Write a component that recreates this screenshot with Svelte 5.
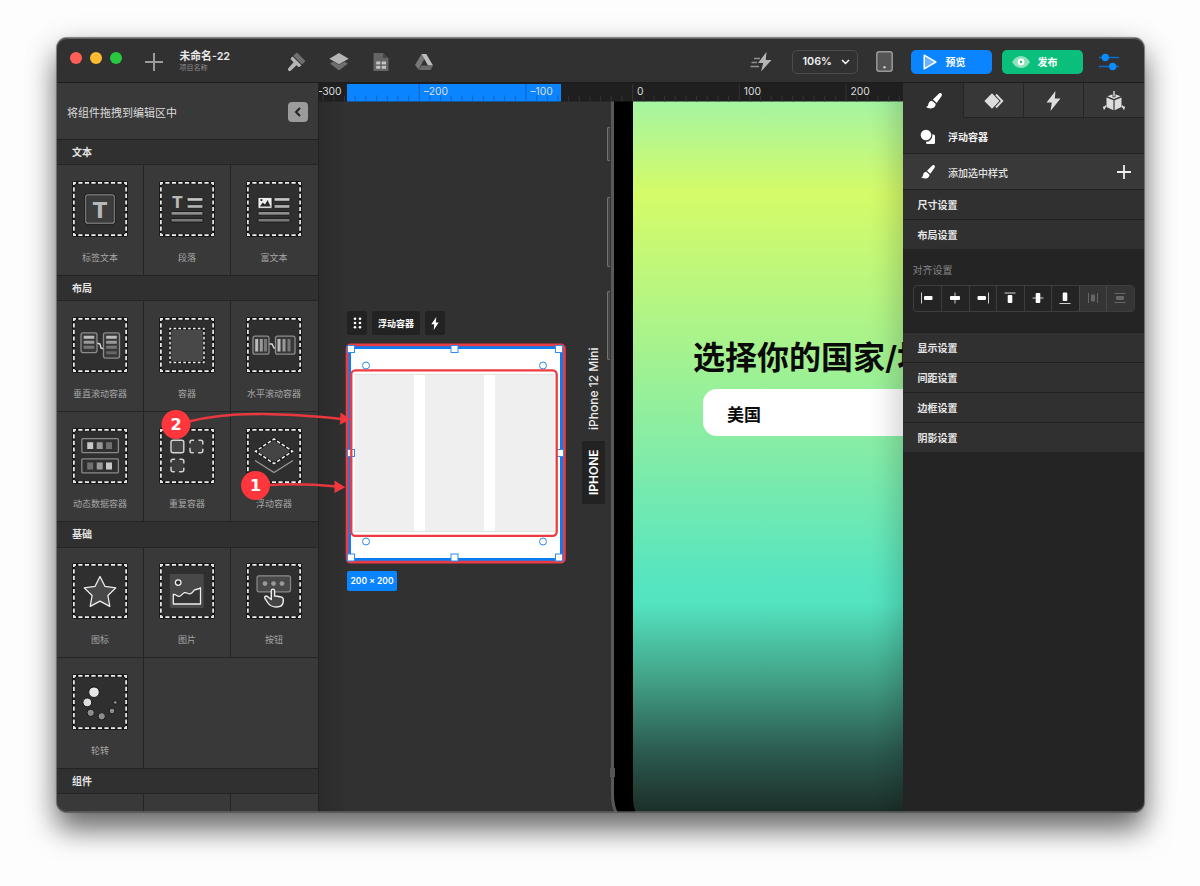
<script lang="ts">
  type Item = { icon: string; label: string };

  const groups: { title: string; items: Item[]; blank?: boolean }[] = [
    {
      title: '文本',
      items: [
        { icon: 'label', label: '标签文本' },
        { icon: 'paragraph', label: '段落' },
        { icon: 'rich', label: '富文本' }
      ]
    },
    {
      title: '布局',
      items: [
        { icon: 'vscroll', label: '垂直滚动容器' },
        { icon: 'container', label: '容器' },
        { icon: 'hscroll', label: '水平滚动容器' },
        { icon: 'dynamic', label: '动态数据容器' },
        { icon: 'repeat', label: '重复容器' },
        { icon: 'float', label: '浮动容器' }
      ]
    },
    {
      title: '基础',
      items: [
        { icon: 'star', label: '图标' },
        { icon: 'image', label: '图片' },
        { icon: 'button', label: '按钮' },
        { icon: 'spinner', label: '轮转' }
      ]
    },
    { title: '组件', items: [], blank: true }
  ];

  const aligns = ['left', 'center', 'right', 'top', 'middle', 'bottom', 'spread-x', 'spread-y'];
  const closedSections = ['显示设置', '间距设置', '边框设置', '阴影设置'];

  // ruler: 100 units are 106.7px wide, zero sits at 314px from the pane's left edge
  const unit = 10.67;
  const ticks = Array.from({ length: 56 }, (_, i) => i - 30).map((n) => ({
    n,
    x: 313.6 + n * unit
  }));

  const handles = [
    [32, 266], [135.5, 266], [240, 266],
    [32, 370], [241, 370],
    [32, 474.5], [135.5, 474.5], [240, 474.5]
  ];
  const knobs = [[47, 282.5], [224, 282.5], [47, 458.5], [224, 458.5]];
</script>

{#snippet glyph(name: string)}
  <svg class="glyph" viewBox="0 0 56 56">
    <rect x="0.8" y="0.8" width="54.4" height="54.4" rx="1" fill="#2f2f2f" stroke="#161616" />
    <rect x="1.9" y="1.9" width="52.2" height="52.2" fill="none" stroke="#161616" stroke-width="2.6" />
    <rect
      x="1.9" y="1.9" width="52.2" height="52.2" fill="none" stroke="#eee" stroke-width="1.7"
      stroke-dasharray="4.2 2.325" stroke-dashoffset="2.1"
    />
    {#if name === 'label'}
      <rect x="13.8" y="13.8" width="28.4" height="28.4" rx="2" fill="#3c3c3c" stroke="#161616" stroke-width="2.6" />
      <rect x="13.8" y="13.8" width="28.4" height="28.4" rx="2" fill="none" stroke="#8f8f8f" stroke-width="1.2" />
      <text x="28" y="36.6" font-size="21" text-anchor="middle" class="tee">T</text>
    {:else if name === 'paragraph' || name === 'rich'}
      {#if name === 'paragraph'}
        <text x="18.4" y="27.3" font-size="15" text-anchor="middle" class="tee">T</text>
      {:else}
        <rect x="12" y="16.4" width="14" height="11" rx="1" fill="#eee" stroke="#161616" stroke-width=".8" />
        <path d="M13.8 25.6l3-4.2 2.2 2 2.6-4.4 3 6.6z" fill="#2a2a2a" />
        <circle cx="15.4" cy="19.1" r="1.1" fill="#2a2a2a" />
      {/if}
      <g stroke="#161616" stroke-width=".9">
        <rect x="28" y="16.6" width="16" height="3.7" rx="1" fill="#c4c4c4" />
        <rect x="28" y="23.6" width="16" height="3.7" rx="1" fill="#b0b0b0" />
        <rect x="12" y="30.5" width="32" height="3.7" rx="1" fill="#8e8e8e" />
        <rect x="12" y="37.4" width="32" height="3.7" rx="1" fill="#777" />
      </g>
    {:else if name === 'vscroll'}
      <path d="M25 26l3 1 1 4 3 1" fill="none" stroke="#ddd" stroke-width="1.4" />
      <g fill="#383838" stroke="#8c8c8c" stroke-width="1.3">
        <rect x="9" y="15.8" width="16" height="19.8" rx="2" />
        <rect x="31.5" y="15.8" width="16" height="25.3" rx="2" />
      </g>
      <path d="M11.7 20.3h10.6M34.2 20.3h10.6" stroke="#bbb" stroke-width="3" />
      <path d="M11.7 25.3h10.6M34.2 25.3h10.6" stroke="#999" stroke-width="3" />
      <path d="M11.7 30.3h10.6M34.2 30.3h10.6" stroke="#777" stroke-width="3" />
      <path d="M34.2 35.8h10.6" stroke="#666" stroke-width="3" />
    {:else if name === 'container'}
      <rect x="11" y="11.5" width="34" height="34" fill="#484848" stroke="#161616" stroke-width="2.4" />
      <rect
        x="11" y="11.5" width="34" height="34" fill="none" stroke="#eee" stroke-width="1.5"
        stroke-dasharray="2.7 2.157" stroke-dashoffset="1.35"
      />
    {:else if name === 'hscroll'}
      <path d="M23 27l3 0 2 4 3 1" fill="none" stroke="#ddd" stroke-width="1.4" />
      <g fill="#383838" stroke="#8c8c8c" stroke-width="1.3">
        <rect x="7" y="19.2" width="16" height="18" rx="2" />
        <rect x="29.5" y="19.2" width="19.5" height="18" rx="2" />
      </g>
      <path d="M10.7 22v12.5M33 22v12.5" stroke="#bbb" stroke-width="3" />
      <path d="M15.3 22v12.5M38 22v12.5" stroke="#999" stroke-width="3" />
      <path d="M19.5 22v12.5M43 22v12.5" stroke="#777" stroke-width="3" />
    {:else if name === 'dynamic'}
      <g fill="#303030" stroke="#8a8a8a" stroke-width="1.3">
        <rect x="9.8" y="10.6" width="36.6" height="14" rx="1" />
        <rect x="9.8" y="30.9" width="36.6" height="14" rx="1" />
      </g>
      <path d="M15.2 14.3h6v6.8h-6zM34 34.6h6v6.8h-6z" fill="#c8c8c8" />
      <path d="M24.7 14.3h6v6.8h-6zM24.7 34.6h6v6.8h-6z" fill="#999" />
      <path d="M34 14.3h6v6.8h-6zM15.2 34.6h6v6.8h-6z" fill="#707070" />
    {:else if name === 'repeat'}
      <rect x="12" y="12.3" width="12.8" height="12.4" rx="2" fill="#444" stroke="#d5d5d5" stroke-width="1.4" />
      <g fill="#3c3c3c" stroke="#d0d0d0" stroke-width="1.5" stroke-dasharray="7.4 4.34" stroke-dashoffset="5.3">
        <rect x="31" y="12.3" width="12.8" height="12.4" rx="2" />
        <rect x="12" y="31.3" width="12.8" height="12.4" rx="2" />
      </g>
    {:else if name === 'float'}
      <path d="M9 32.4L28 44.5 47 32.4" fill="none" stroke="#9a9a9a" stroke-width="1.2" />
      <path d="M28 11L46.5 23.3 28 35.6 9.5 23.3z" fill="#444" stroke="#161616" stroke-width="2.6" />
      <path
        d="M28 11L46.5 23.3 28 35.6 9.5 23.3z" fill="none" stroke="#eee" stroke-width="1.5"
        stroke-dasharray="3.6 1.95" stroke-dashoffset="1.8"
      />
    {:else if name === 'star'}
      <path
        d="M28 13.5l4.9 9.8 10.9 1.6-7.9 7.6 1.9 10.8-9.8-5.1-9.8 5.1 1.9-10.8-7.9-7.6 10.9-1.6z"
        fill="#484848" stroke="#eee" stroke-width="1.3" stroke-linejoin="round"
      />
    {:else if name === 'image'}
      <rect x="10.8" y="11" width="34" height="34" rx="1" fill="#484848" />
      <circle cx="19.2" cy="19.6" r="2.8" fill="#2c2c2c" stroke="#eee" stroke-width="1.3" />
      <path
        d="M14.3 31.5c3-.6 3.5 2.2 6 1.8 2.5-.3 3-3 5.2-3.6 2.5-.6 3.7 1.8 6 1 2.5-.7 2.5-3.2 4.8-4 2-.7 3.500-.3 5.200-2V41H14.300z"
        fill="#333" stroke="#eee" stroke-width="1.3" stroke-linejoin="round"
      />
    {:else if name === 'button'}
      <rect x="11" y="12.8" width="33.5" height="16" rx="2" fill="#484848" stroke="#8a8a8a" stroke-width="1.2" />
      <g fill="#999">
        <circle cx="19" cy="20.6" r="2.4" /><circle cx="27.5" cy="20.6" r="2.4" /><circle cx="36" cy="20.6" r="2.4" />
      </g>
      <path
        d="M25.3 36.5v-8.7q0-1.7 1.6-1.7t1.7 1.7v5.2q6.5.5 8 1.7c1 .8.9 2.5.5 5-.5 3-3 4.3-6.6 4.3-4.5 0-7-1.5-8.9-4.5l-2.8-4.3c-.8-1.7 1-2.7 2.5-1.8l2 1.6z"
        fill="#444" stroke="#eee" stroke-width="1.4" stroke-linejoin="round"
      />
    {:else if name === 'spinner'}
      <g stroke="#161616">
        <circle cx="22" cy="18.2" r="5.3" fill="#e6e6e6" />
        <circle cx="15.3" cy="28.4" r="4.4" fill="#ddd" />
        <circle cx="18.7" cy="38.8" r="3.7" fill="#8c8c8c" />
        <circle cx="29.7" cy="42.3" r="3.7" fill="#8c8c8c" />
        <circle cx="40" cy="37" r="2.9" fill="#8c8c8c" />
        <circle cx="43.3" cy="28.4" r="1.9" fill="#8c8c8c" />
      </g>
    {/if}
  </svg>
{/snippet}

{#snippet brush(size: number)}
  <svg width={size} height={size} viewBox="0 0 18 18" fill="#fff">
    <path d="M17.3.7c1 1 .6 2.2-.1 3.200L12 11.200 7.700 7.400 14.100 1c1-.9 2.200-1.300 3.200-.3z" />
    <path d="M6.600 8.600l4.200 3.600c.3 3.200-2.400 5.200-5.400 5.200-2.500 0-4.500-.8-5.300-1.900 1.900-.3 2.200-1.300 2.600-3.100.4-2 2-3.800 3.900-3.800z" />
  </svg>
{/snippet}

<div class="window">
  <header class="toolbar">
    <div class="lights"><i class="red"></i><i class="amber"></i><i class="green"></i></div>
    <svg class="add" width="18" height="18" viewBox="0 0 18 18"><path d="M9 0v18M0 9h18" stroke="#9b9b9b" stroke-width="2" /></svg>
    <div class="project">
      <strong>未命名-22</strong>
      <small>项目名称</small>
    </div>
    <nav class="tools">
      <svg width="20" height="20" viewBox="0 0 20 20">
        <path d="M7.200 3.800L10.200.9q.6-.5 1.200 0L19 8.400q.6.600 0 1.200l-3 3z" fill="#707070" />
        <path d="M6.600 4.400l8.800 8.800-1.700 1.600q-.8.600-1.500 0l-1.700-1.600-5.800 5.500q-1.200.9-2.300-.1-1-1.200-.1-2.400l5.300-6-2.700-2.600q-.6-.8 0-1.500z" fill="#b5b5b5" />
      </svg>
      <svg width="20" height="20" viewBox="0 0 20 20">
        <path d="M1 11.500L4.500 9.800 10 12.700l5.500-2.900L19 11.500 10 18.500z" fill="#6e6e6e" />
        <path d="M10 1l9.700 5.800L10 12.300.3 6.800z" fill="#b5b5b5" />
      </svg>
      <svg width="20" height="20" viewBox="0 0 20 20">
        <path d="M2.500 1H12l5.500 5v13h-15z" fill="#656565" />
        <path d="M12 1v5h5.500z" fill="#454545" />
        <path d="M5.200 9.500h9.800v7.300H5.200z" fill="#c4c4c4" />
        <path d="M5 13.200h10M10 9v8" stroke="#555" stroke-width="1.200" />
      </svg>
      <svg width="20" height="20" viewBox="0 0 20 20">
        <path d="M7.500 2L10.300 7 4.600 17.500 1 13z" fill="#777" />
        <path d="M7.500 2h4.800L19 13.500h-5z" fill="#bdbdbd" />
        <path d="M7.500 13.500H19L16.500 18H4.600z" fill="#6a6a6a" />
      </svg>
    </nav>
    <div class="actions">
      <svg class="flash" width="22" height="20" viewBox="0 0 22 20">
        <path d="M16.500 0L8 11h5.200L11 19.500 21.500 8h-5.700z" fill="#b5b5b5" />
        <path d="M4 6.500h6M1.500 10.500H7M.5 14.500H9" stroke="#909090" stroke-width="1.500" />
      </svg>
      <div class="zoom">
        106%
        <svg width="9" height="6" viewBox="0 0 9 6"><path d="M1 1l3.500 3.500L8 1" fill="none" stroke="#fff" stroke-width="1.500" /></svg>
      </div>
      <svg class="device" width="17" height="21" viewBox="0 0 17 21">
        <rect x=".8" y=".8" width="15.400" height="19.400" rx="2.500" fill="#555" stroke="#999" stroke-width="1.500" />
        <circle cx="8.500" cy="16.300" r="1.200" fill="#ccc" />
      </svg>
      <button class="preview">
        <svg width="14" height="16" viewBox="0 0 14 16"><path d="M1.200 1.200L12.800 8 1.200 14.800z" fill="#6bb5ff" stroke="#fff" stroke-width="1.500" stroke-linejoin="round" /></svg>
        预览
      </button>
      <button class="publish">
        <svg width="18" height="12" viewBox="0 0 18 12">
          <path d="M0 6Q3.500 0 9 0t9 6q-3.500 6-9 6T0 6z" fill="#8fe0bd" />
          <circle cx="9" cy="6" r="3.400" fill="#fff" /><circle cx="9" cy="6" r="1.200" fill="#0abf7b" />
        </svg>
        发布
      </button>
      <svg class="sliders" width="20" height="18" viewBox="0 0 20 18">
        <path d="M0 4.500h20M0 13.500h20" stroke="#0a6ec9" stroke-width="1.500" />
        <circle cx="6.300" cy="4.500" r="3.700" fill="#0a8cff" /><circle cx="13.700" cy="13.500" r="3.700" fill="#0a8cff" />
      </svg>
    </div>
  </header>

  <aside class="library">
    <div class="hint">
      将组件拖拽到编辑区中
      <span class="collapse"><svg width="8" height="10" viewBox="0 0 8 10"><path d="M6 1L2 5l4 4" fill="none" stroke="#222" stroke-width="2" /></svg></span>
    </div>
    {#each groups as group}
      <h2>{group.title}</h2>
      <div class="cells">
        {#each group.items as item}
          <div class="cell">
            {@render glyph(item.icon)}
            <span>{item.label}</span>
          </div>
        {/each}
        {#if group.items.length % 3 === 1}
          <div class="filler"></div>
        {/if}
        {#if group.blank}
          <div class="cell"></div><div class="cell"></div><div class="cell"></div>
        {/if}
      </div>
    {/each}
  </aside>

  <main class="canvas">
    <svg class="ruler" width="584" height="19" viewBox="0 0 584 19">
      <rect width="584" height="18.500" fill="#1f1f1f" />
      <rect x="28" y="1" width="214" height="17.500" fill="#0a84ff" />
      {#each ticks as tick}
        {@const major = tick.n % 10 === 0}
        <path
          d="M{tick.x} {major ? 1 : 12.5}V18.5"
          stroke={tick.x > 28 && tick.x < 242 ? '#0865c4' : '#343434'}
        />
        {#if major}
          <text x={tick.x + 4.5} y="12">{tick.n < 0 ? '–' : ''}{Math.abs(tick.n * 10)}</text>
        {/if}
      {/each}
    </svg>

    <div class="bezel"></div>
    <i class="key mute"></i><i class="key up"></i><i class="key down"></i><i class="band"></i>
    <div class="screen">
      <h1>选择你的国家/地区</h1>
      <div class="country">美国</div>
    </div>
    <div class="fade"></div>

    <div class="device-name">iPhone 12 Mini</div>
    <div class="device-tag">IPHONE</div>

    <div class="chips">
      <span class="chip"><svg width="9" height="12" viewBox="0 0 9 12" fill="#fff">
        {#each [1.7, 6, 10.3] as y}<circle cx="2" cy={y} r="1.3" /><circle cx="7" cy={y} r="1.3" />{/each}
      </svg></span>
      <span class="chip wide">浮动容器</span>
      <span class="chip"><svg width="8" height="13" viewBox="0 0 8 13"><path d="M5.300 0L.3 7.200h2.900L2.700 13l5-7.500H4.800z" fill="#fff" /></svg></span>
    </div>

    <div class="selection">
      <div class="columns"><i></i><i></i><i></i></div>
    </div>
    <svg class="marks" width="584" height="600" viewBox="0 0 584 600">
      <rect x="28.100" y="261.900" width="217.300" height="217.300" rx="3.500" fill="none" stroke="#e93c44" stroke-width="2.800" />
      <g fill="#fff" stroke="#2d8cf0">
        {#each handles as [x, y]}<rect x={x - 3.5} y={y - 3.5} width="7" height="7" />{/each}
        {#each knobs as [x, y]}<circle cx={x} cy={y} r="3.500" />{/each}
      </g>
      <rect x="32.300" y="287.300" width="205.400" height="165.500" rx="4" fill="none" stroke="#ee3a41" stroke-width="2.300" />
    </svg>
    <div class="size">200 × 200</div>
  </main>

  <aside class="inspector">
    <nav class="tabs">
      <span class="active">{@render brush(16)}</span>
      <span><svg width="20" height="16" viewBox="0 0 20 16">
        <path d="M7.500.8Q8 .3 8.500.8L15 7.500q.5.500 0 1L8.500 15.200q-.5.500-1 0L.8 8.500q-.5-.5 0-1z" fill="#ddd" />
        <path d="M12 1.500L18.200 8 12 14.500" fill="none" stroke="#ddd" stroke-width="1.900" />
      </svg></span>
      <span><svg width="15" height="20" viewBox="0 0 15 20"><path d="M9.500 0L.5 11.500h5.300L4.500 20l10-12.500H8.800z" fill="#ddd" /></svg></span>
      <span><svg width="22" height="20" viewBox="0 0 22 20">
        <path d="M3.500 6.500l6.900 2.700v10L3.500 16zM18.500 6.500l-6.900 2.700v10L18.500 16zM4.500 5.300L9.500 3.300v3h3v-3l5 2L11 8z" fill="#ddd" />
        <path d="M11 0v5.500M3 14.500L.8 18.500M19 14.500l2.200 4M0 16.500l3-1M22 16.500l-3-1" fill="none" stroke="#ddd" stroke-width="1.400" />
      </svg></span>
    </nav>
    <div class="row target">
      <svg width="16" height="16" viewBox="0 0 16 16">
        <path d="M8 5.500h5.500Q15 5.500 15 7v6.500q0 1.500-1.500 1.500H7.500Q6 15 6 13.500V12z" fill="#fff" /><circle cx="6" cy="6.500" r="6.300" fill="#303030" /><circle cx="6" cy="6" r="5.300" fill="#fff" />
      </svg>
      浮动容器
    </div>
    <div class="row style">
      {@render brush(14)}
      添加选中样式
      <svg class="plus" width="14" height="14" viewBox="0 0 14 14"><path d="M7 0v14M0 7h14" stroke="#eee" stroke-width="1.800" /></svg>
    </div>
    <h3>尺寸设置</h3>
    <h3>布局设置</h3>
    <section>
      <p>对齐设置</p>
      <div class="aligns">
        {#each aligns as align}
          <span class:off={align.startsWith('spread')}>
            <svg width="14" height="14" viewBox="0 0 14 14">
              {#if align === 'left'}
                <path d="M1.500 1.500v11" /><rect x="4" y="5" width="8.500" height="4" rx="1" />
              {:else if align === 'center'}
                <path d="M7 1.500v11" /><rect x="2" y="5" width="10" height="4" rx="1" />
              {:else if align === 'right'}
                <path d="M12.500 1.500v11" /><rect x="1.500" y="5" width="8.500" height="4" rx="1" />
              {:else if align === 'top'}
                <path d="M1.500 2h11" /><rect x="4.700" y="4" width="4.600" height="8" rx="1" />
              {:else if align === 'middle'}
                <path d="M1.500 7h11" /><rect x="4.700" y="2" width="4.600" height="10" rx="1" />
              {:else if align === 'bottom'}
                <path d="M1.500 12.500h11" /><rect x="4.700" y="1.500" width="4.600" height="8.500" rx="1" />
              {:else if align === 'spread-x'}
                <path d="M2.500 2v10M11.500 2v10" /><rect x="5" y="3.500" width="4" height="7" rx="1" />
              {:else}
                <path d="M1.500 2.500h11M1.500 11.500h11" /><rect x="3" y="5" width="8" height="4" rx="1" />
              {/if}
            </svg>
          </span>
        {/each}
      </div>
    </section>
    {#each closedSections as title}
      <h3>{title}</h3>
    {/each}
  </aside>
</div>

<svg class="callouts" width="1200" height="886" viewBox="0 0 1200 886">
  <g fill="none" stroke="#e8383f" stroke-width="2.600">
    <path d="M189 421.500C235 410 290 414 342 419" />
    <path d="M269 485Q300 483 337 486.500" />
  </g>
  <path d="M340.500 412.500l10 6.800-10.500 5.500zM334.500 480.500l10.800 6.800-10.800 5.700z" fill="#f2383e" />
  <g fill="#ff373c"><circle cx="176" cy="424.500" r="14.400" /><circle cx="255.500" cy="485.500" r="14.400" /></g>
  <text x="176" y="430.300">2</text>
  <text x="255.500" y="491.300">1</text>
</svg>

<style>
  :global(body) {
    display: flow-root;
    box-sizing: border-box;
    height: 886px;
    background: #fdfdfd;
    font-family: Inter, 'Noto Sans CJK SC', sans-serif;
  }

  svg {
    display: block;
    flex: none;
  }

  .window {
    position: relative;
    display: grid;
    grid-template: 45px 1fr / 262px 584px 1fr;
    box-sizing: border-box;
    width: 1087px;
    height: 773.5px;
    margin: 38px 0 0 57px;
    overflow: hidden;
    border-radius: 10px;
    background: #303030;
    box-shadow:
      0 0 0 1px rgba(80, 80, 80, 0.6),
      0 0 3px rgba(0, 0, 0, 0.25),
      0 18px 28px rgba(0, 0, 0, 0.5),
      0 8px 34px rgba(0, 0, 0, 0.18);
  }

  .window::after {
    content: '';
    position: absolute;
    inset: 0;
    border-radius: 10px;
    box-shadow: inset 0 1px 0 #636363, inset 0 -1px 0 rgba(120, 120, 120, 0.5);
    pointer-events: none;
  }

  .toolbar {
    grid-column: 1 / -1;
    display: flex;
    align-items: center;
    box-sizing: border-box;
    padding: 3px 25.5px 0 13px;
    border-bottom: 1px solid #1c1c1c;
    background: #313131;
  }

  .lights {
    display: flex;
    gap: 8px;
    margin-top: -8px;
  }

  .lights i {
    width: 12px;
    height: 12px;
    border-radius: 50%;
  }

  .red { background: #ff5f57; }
  .amber { background: #febc2e; }
  .green { background: #28c840; }

  .add {
    margin-left: 22.5px;
  }

  .project {
    width: 106.5px;
    margin-left: 17px;
    color: #e8e8e8;
    line-height: 1;
  }

  .project strong {
    display: block;
    font-size: 10.8px;
    font-weight: 600;
  }

  .project small {
    display: block;
    margin-top: 2px;
    color: #8d8d8d;
    font-size: 7px;
  }

  .tools {
    display: flex;
    gap: 22.5px;
  }

  .actions {
    display: flex;
    align-items: center;
    margin-left: auto;
  }

  .zoom {
    display: flex;
    align-items: center;
    gap: 9px;
    box-sizing: border-box;
    width: 66px;
    height: 24px;
    margin-left: 20px;
    padding-left: 10px;
    border: 1px solid #4d4d4d;
    border-radius: 5px;
    color: #f2f2f2;
    font-size: 10.8px;
    font-weight: 600;
  }

  .device {
    margin-left: 18px;
  }

  button {
    display: flex;
    align-items: center;
    width: 81px;
    height: 24px;
    padding: 0;
    border: 0;
    border-radius: 5px;
    color: #fff;
    font: 600 10px Inter, 'Noto Sans CJK SC', sans-serif;
  }

  .preview {
    gap: 9px;
    margin-left: 18px;
    padding-left: 12px;
    background: #0a84ff;
  }

  .publish {
    gap: 8px;
    margin-left: 10px;
    padding-left: 10px;
    background: #0abf7b;
  }

  .sliders {
    margin-left: 16px;
  }

  .library {
    overflow: hidden;
    border-right: 1px solid #222;
    background: #393939;
  }

  .hint {
    display: flex;
    align-items: center;
    justify-content: space-between;
    height: 56px;
    padding: 2px 10px 0;
    box-sizing: border-box;
    color: #dcdcdc;
    font-size: 11px;
  }

  .collapse {
    display: grid;
    place-items: center;
    width: 20px;
    height: 20px;
    border-radius: 4px;
    background: #9b9b9b;
  }

  h2 {
    box-sizing: border-box;
    height: 25.3px;
    margin: 0;
    padding-left: 15px;
    border-top: 1px solid #232323;
    background: #303030;
    color: #e4e4e4;
    font-size: 10px;
    font-weight: 600;
    line-height: 25px;
  }

  .cells {
    display: grid;
    grid-template-columns: 87px 87px 87px;
    grid-auto-rows: 110.6px;
  }

  .cell {
    box-sizing: border-box;
    padding-top: 15.8px;
    border-top: 1px solid #252525;
    border-right: 1px solid #252525;
    color: #a6a6a6;
    font-size: 9px;
    line-height: 14px;
    text-align: center;
  }

  .cell:nth-child(3n) {
    border-right-color: transparent;
  }

  .filler {
    grid-column: span 2;
    border-top: 1px solid #252525;
  }

  .glyph {
    width: 56px;
    height: 56px;
    margin: 0 auto 13.6px;
  }

  .tee {
    fill: #b8b8b8;
    font-family: 'DejaVu Sans', sans-serif;
    font-weight: 700;
  }

  .canvas {
    position: relative;
    overflow: hidden;
    background: linear-gradient(90deg, #2b2b2b, #313131 30px);
  }

  .ruler {
    position: absolute;
    top: 0;
    left: 0;
    z-index: 2;
  }

  .ruler text {
    fill: #ddd;
    font-size: 10.3px;
  }

  .bezel {
    position: absolute;
    top: -80px;
    left: 292px;
    box-sizing: border-box;
    width: 420px;
    height: 838px;
    border: 3px solid #58585a;
    border-radius: 46px;
    background: #000;
  }

  .key {
    position: absolute;
    left: 288px;
    width: 3px;
    box-sizing: border-box;
    border: 1px solid #737373;
    border-right: 0;
    border-radius: 2px 0 0 2px;
    background: #444;
  }

  .mute { top: 44px; height: 34px; }
  .up { top: 114px; height: 70px; }
  .down { top: 208px; height: 69px; }

  .band {
    position: absolute;
    top: 685px;
    left: 291px;
    width: 5px;
    height: 9px;
    background: #555;
  }

  .screen {
    position: absolute;
    top: 18px;
    left: 314px;
    width: 400px;
    height: 732px;
    overflow: hidden;
    border-bottom-left-radius: 34px;
    background: linear-gradient(
      180deg,
      #a4f4a2 0,
      #d5fb68 92px,
      #bdf77c 175px,
      #a8f38c 240px,
      #87eda5 340px,
      #56e5c0 480px,
      #54e4c0 502px,
      #42a287 578px,
      #2b5b50 650px,
      #1c2f29 710px
    );
  }

  h1 {
    margin: 235px 0 0 60px;
    color: #0a0a0a;
    font-size: 32px;
    font-weight: 600;
    line-height: 44px;
    white-space: nowrap;
  }

  .country {
    width: 280px;
    box-sizing: border-box;
    height: 47px;
    margin: 9px 0 0 70px;
    padding-left: 24px;
    border-radius: 14px;
    background: #fff;
    color: #0a0a0a;
    font-size: 17px;
    font-weight: 600;
    line-height: 52px;
  }

  .fade {
    position: absolute;
    top: 19px;
    right: 0;
    bottom: 0;
    width: 34px;
    background: linear-gradient(90deg, transparent, rgba(0, 0, 0, 0.03) 40%, rgba(0, 0, 0, 0.13));
  }

  .device-name,
  .device-tag {
    position: absolute;
    writing-mode: vertical-rl;
    transform: rotate(180deg);
    color: #e9e9e9;
    font-size: 12px;
    font-weight: 500;
    line-height: 23px;
    text-align: center;
    white-space: nowrap;
  }

  .device-name {
    top: 260px;
    left: 262.5px;
    height: 92px;
  }

  .device-tag {
    top: 358px;
    left: 262.5px;
    height: 63px;
    background: #222;
    color: #fff;
    font-weight: 600;
  }

  .chips {
    position: absolute;
    top: 228px;
    left: 28px;
    display: flex;
    gap: 5px;
  }

  .chip {
    display: grid;
    place-items: center;
    width: 20px;
    height: 24px;
    border-radius: 2px;
    background: #222;
    color: #fff;
    font-size: 9px;
    font-weight: 600;
  }

  .chip.wide {
    width: 48px;
  }

  .selection {
    position: absolute;
    top: 263px;
    left: 29px;
    box-sizing: border-box;
    width: 215px;
    height: 215px;
    padding: 25px 5px 23px 3px;
    border: 3px solid #0a7df0;
    background: #fff;
  }

  .columns {
    display: flex;
    gap: 11px;
    height: 156px;
    padding: 0 1px;
    border: 1px solid #e2e2e2;
    border-width: 1px 0;
  }

  .columns i {
    flex: 1;
    background: #efefef;
  }

  .marks {
    position: absolute;
    top: 0;
    left: 0;
  }

  .size {
    position: absolute;
    top: 488px;
    left: 28px;
    width: 50px;
    height: 20px;
    border-radius: 2px;
    background: #0a84ff;
    color: #fff;
    font-size: 8.5px;
    font-weight: 600;
    line-height: 20px;
    text-align: center;
  }

  .inspector {
    background: #242424;
  }

  .tabs {
    display: grid;
    grid-template-columns: 60px 60px 60px 1fr;
    height: 35px;
  }

  .tabs span {
    display: grid;
    place-items: center;
    padding-top: 2px;
    border-bottom: 1px solid #252525;
    border-left: 1px solid #252525;
    background: #373737;
  }

  .tabs .active {
    border-color: #303030;
    background: #303030;
  }

  .row {
    display: flex;
    align-items: center;
    box-sizing: border-box;
    gap: 12px;
    padding: 2px 13px 0 17px;
    background: #303030;
    color: #f2f2f2;
    font-size: 10px;
    font-weight: 600;
  }

  .target {
    height: 36px;
    border-bottom: 1px solid #222;
  }

  .style {
    gap: 13px;
    height: 35px;
    padding: 1px 13px 0 18px;
    background: #393939;
    color: #e4e4e4;
    font-weight: 500;
  }

  .plus {
    margin-left: auto;
  }

  h3 {
    box-sizing: border-box;
    height: 30.1px;
    margin: 0;
    padding-left: 14.5px;
    border-top: 1px solid #212121;
    background: #303030;
    color: #e6e6e6;
    font-size: 10px;
    font-weight: 600;
    line-height: 30px;
  }

  section {
    box-sizing: border-box;
    height: 82.8px;
    padding: 14px 9.5px 0;
  }

  p {
    margin: 0 0 6.5px;
    color: #858585;
    font-size: 10px;
    line-height: 15px;
  }

  .aligns {
    display: grid;
    grid-template-columns: repeat(8, 1fr);
    box-sizing: border-box;
    height: 27px;
    overflow: hidden;
    border: 1px solid #3d3d3d;
    border-radius: 4px;
  }

  .aligns span {
    display: grid;
    place-items: center;
    border-left: 1px solid #3d3d3d;
  }

  .aligns span:first-child {
    border-left: 0;
  }

  .aligns rect {
    fill: #fff;
  }

  .aligns path {
    stroke: #d0d0d0;
  }

  .aligns .off {
    border-left-color: #484848;
    background: #353535;
  }

  .aligns .off rect {
    fill: #666;
  }

  .aligns .off path {
    stroke: #666;
  }

  .callouts {
    position: absolute;
    top: 0;
    left: 0;
    pointer-events: none;
  }

  .callouts text {
    fill: #fff;
    font: 700 16px 'DejaVu Sans', sans-serif;
    text-anchor: middle;
  }
</style>
